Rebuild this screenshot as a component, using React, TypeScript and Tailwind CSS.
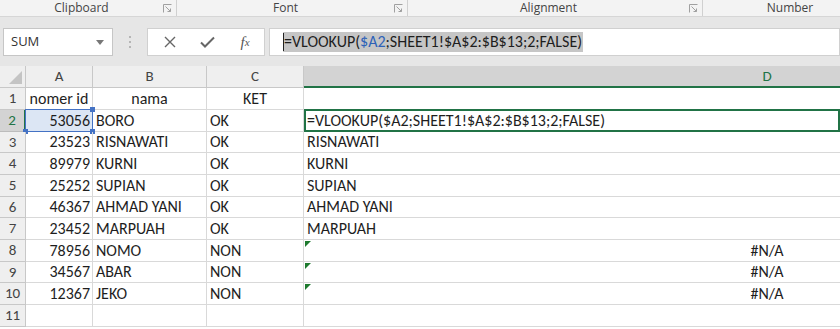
import React from "react";

type Row = {
  n: number;
  a: string;
  b: string;
  c: string;
  d: string;
  h: string;
  kind: "head" | "formula" | "text" | "err" | "empty";
};

const rows: Row[] = [
  { n: 1, a: "nomer id", b: "nama", c: "KET", d: "", h: "h-[22px]", kind: "head" },
  { n: 2, a: "53056", b: "BORO", c: "OK", d: "=VLOOKUP($A2;SHEET1!$A$2:$B$13;2;FALSE)", h: "h-[22px]", kind: "formula" },
  { n: 3, a: "23523", b: "RISNAWATI", c: "OK", d: "RISNAWATI", h: "h-[21px]", kind: "text" },
  { n: 4, a: "89979", b: "KURNI", c: "OK", d: "KURNI", h: "h-[22px]", kind: "text" },
  { n: 5, a: "25252", b: "SUPIAN", c: "OK", d: "SUPIAN", h: "h-[22px]", kind: "text" },
  { n: 6, a: "46367", b: "AHMAD YANI", c: "OK", d: "AHMAD YANI", h: "h-[21px]", kind: "text" },
  { n: 7, a: "23452", b: "MARPUAH", c: "OK", d: "MARPUAH", h: "h-[22px]", kind: "text" },
  { n: 8, a: "78956", b: "NOMO", c: "NON", d: "#N/A", h: "h-[22px]", kind: "err" },
  { n: 9, a: "34567", b: "ABAR", c: "NON", d: "#N/A", h: "h-[21px]", kind: "err" },
  { n: 10, a: "12367", b: "JEKO", c: "NON", d: "#N/A", h: "h-[22px]", kind: "err" },
  { n: 11, a: "", b: "", c: "", d: "", h: "h-[22px]", kind: "empty" },
];

const cellFont = "font-['Carlito','Lato',sans-serif] text-[16px] text-[#1e1e1e]";

function Launcher() {
  return (
    <svg width="9" height="9" viewBox="0 0 9 9" className="shrink-0">
      <path d="M0.5 8.5V0.5H8.5" fill="none" stroke="#a0a0a0" strokeWidth="1" />
      <path d="M2.5 2.5L7.5 7.5M4.5 7.5H7.5V4.5" fill="none" stroke="#a0a0a0" strokeWidth="1" />
    </svg>
  );
}

function Group({ label, w, launcher = true }: { label: string; w: string; launcher?: boolean }) {
  return (
    <div className={`flex h-full items-center ${w}`}>
      <div className="flex-1 text-center">{label}</div>
      {launcher && (
        <>
          <Launcher />
          <div className="ml-[4px] mr-[0px] h-full w-px bg-[#d0d0d0]" />
        </>
      )}
    </div>
  );
}

function RowHeader({ n, active, h }: { n: number; active: boolean; h: string }) {
  return (
    <div
      className={`relative flex w-[26px] shrink-0 items-center justify-center border-b border-r ${h} ${
        active
          ? "bg-[#d3d3d3] text-[#217346] border-b-[#bcbcbc] border-r-[#217346] border-r-2"
          : "bg-[#efefef] text-[#444] border-[#c8c8c8]"
      } font-['Carlito','Lato',sans-serif] text-[15px]`}
    >
      {n}
    </div>
  );
}

export default function App() {
  return (
    <div className="h-[329px] w-[840px] overflow-hidden bg-white font-['Open_Sans',sans-serif]">
      {/* Ribbon group labels */}
      <div className="flex h-[17px] items-center overflow-hidden border-b border-[#d6d6d6] bg-[#f3f3f3] text-[12px] text-[#444]">
        <Group label="Clipboard" w="w-[177px] shrink-0" />
        <Group label="Font" w="w-[231px] shrink-0" />
        <Group label="Alignment" w="w-[295px] shrink-0" />
        <Group label="Number" w="w-[174px] shrink-0" launcher={false} />
      </div>

      {/* Formula bar */}
      <div className="flex h-[49px] items-start bg-[#e6e6e6] pt-[11px]">
        <div className="ml-[3px] flex h-[28px] w-[110px] items-center border border-[#c6c6c6] bg-white pl-[7px] pr-[8px] text-[13px] text-[#333]">
          <span className="flex-1">SUM</span>
          <svg width="8" height="5" viewBox="0 0 8 5">
            <path d="M0 0H8L4 5Z" fill="#777" />
          </svg>
        </div>
        <div className="flex h-[28px] w-[34px] flex-col items-center justify-center gap-[3px]">
          <div className="h-[2px] w-[2px] bg-[#b5b5b5]" />
          <div className="h-[2px] w-[2px] bg-[#b5b5b5]" />
          <div className="h-[2px] w-[2px] bg-[#b5b5b5]" />
        </div>
        <div className="flex h-[28px] w-[118px] items-center border border-[#d0d0d0] bg-white">
          <div className="flex w-[40px] justify-center pl-[3px]">
            <svg width="12" height="12" viewBox="0 0 12 12">
              <path d="M1 1L11 11M11 1L1 11" stroke="#666" strokeWidth="1.4" />
            </svg>
          </div>
          <div className="flex w-[38px] justify-center">
            <svg width="15" height="12" viewBox="0 0 15 12">
              <path d="M1 6.5L5 10.5L14 1.5" fill="none" stroke="#666" strokeWidth="2" />
            </svg>
          </div>
          <div className="flex w-[38px] justify-center font-['Liberation_Serif',serif] text-[15px] italic text-[#555]">
            <span>f</span>
            <span className="mt-[3px] text-[11px]">x</span>
          </div>
        </div>
        <div className="ml-[4px] flex h-[28px] flex-1 items-center border border-[#d0d0d0] bg-white pl-[13px]">
          <div className={`flex h-[20px] items-center bg-[#c6c6c6] pr-[1px] ${cellFont}`}>
            <div className="h-[18px] w-px bg-[#222]" />
            <span>=VLOOKUP(</span>
            <span className="text-[#2e62b8]">$A2</span>
            <span>;SHEET1!$A$2:$B$13;2;FALSE)</span>
          </div>
        </div>
      </div>

      {/* Column headers */}
      <div className="flex h-[22px] text-[#444]">
        <div className="relative w-[26px] shrink-0 border-b border-r border-[#c8c8c8] bg-[#efefef]">
          <svg className="absolute bottom-[3px] right-[3px]" width="13" height="13" viewBox="0 0 13 13">
            <path d="M13 0V13H0Z" fill="#c4c4c4" />
          </svg>
        </div>
        {[
          { l: "A", w: "w-[67px]" },
          { l: "B", w: "w-[114px]" },
          { l: "C", w: "w-[97px]" },
        ].map((c) => (
          <div
            key={c.l}
            className={`flex shrink-0 items-center justify-center border-b border-r border-[#c8c8c8] bg-[#efefef] ${c.w} font-['Carlito','Lato',sans-serif] text-[15px]`}
          >
            {c.l}
          </div>
        ))}
        <div className="flex-1 overflow-hidden border-b-2 border-[#217346] bg-[#d3d3d3]">
          <div className="flex h-full w-[926px] items-center justify-center font-['Carlito','Lato',sans-serif] text-[15px] text-[#217346]">
            D
          </div>
        </div>
      </div>

      {/* Rows */}
      {rows.map((r) => (
        <div key={r.n} className={`flex ${r.h}`}>
          <RowHeader n={r.n} active={r.n === 2} h={r.h} />
          {/* A */}
          <div
            className={`relative flex w-[67px] shrink-0 items-center whitespace-nowrap border-b border-r border-[#d9d9d9] ${cellFont} ${
              r.kind === "head" ? "justify-center" : "justify-end pr-[2px]"
            } ${r.n === 2 ? "bg-[#dce6f4]" : ""}`}
          >
            {r.a}
            {r.n === 2 && (
              <div className="absolute -left-px -top-px bottom-[-1px] right-[-1px] border border-[#4472c4]">
                <div className="absolute -right-[3px] -top-[3px] h-[5px] w-[5px] bg-[#4472c4]" />
                <div className="absolute -bottom-[3px] -right-[3px] h-[5px] w-[5px] bg-[#4472c4]" />
                <div className="absolute -bottom-[3px] -left-[3px] h-[5px] w-[5px] bg-[#4472c4]" />
              </div>
            )}
          </div>
          {/* B */}
          <div
            className={`flex w-[114px] shrink-0 items-center whitespace-nowrap border-b border-r border-[#d9d9d9] ${cellFont} ${
              r.kind === "head" ? "justify-center" : "pl-[3px]"
            }`}
          >
            {r.b}
          </div>
          {/* C */}
          <div
            className={`flex w-[97px] shrink-0 items-center whitespace-nowrap border-b border-r border-[#d9d9d9] ${cellFont} ${
              r.kind === "head" ? "justify-center" : "pl-[3px]"
            }`}
          >
            {r.c}
          </div>
          {/* D */}
          <div className={`relative flex-1 overflow-visible border-b border-[#d9d9d9] ${cellFont}`}>
            {r.kind === "err" ? (
              <>
                <svg className="absolute left-[1px] top-[1px]" width="6" height="6" viewBox="0 0 6 6">
                  <path d="M0 0H6L0 6Z" fill="#1d7a2e" />
                </svg>
                <div className="flex h-full w-[926px] items-center justify-center">{r.d}</div>
              </>
            ) : (
              <div className="flex h-full items-center whitespace-nowrap pl-[3px]">{r.d}</div>
            )}
            {r.kind === "formula" && (
              <div className="absolute -top-px bottom-[-1px] left-0 right-0 border-2 border-[#217346]" />
            )}
          </div>
        </div>
      ))}
    </div>
  );
}
